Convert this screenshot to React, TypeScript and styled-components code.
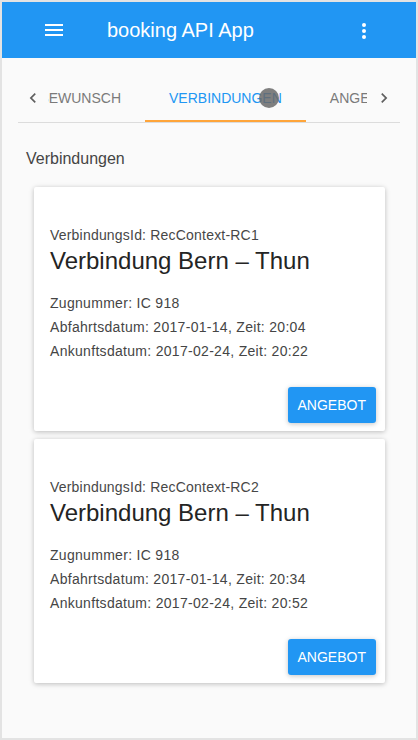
import React, { useLayoutEffect, useRef } from "react";
import styled, { createGlobalStyle } from "styled-components";

const GlobalStyle = createGlobalStyle`
  html, body { margin: 0; padding: 0; background: #ffffff; }
  body { font-family: "Liberation Sans", Arial, sans-serif; }
  * { box-sizing: border-box; }
`;

const Frame = styled.div`
  width: 418px;
  height: 740px;
  border: 2px solid #e3e3e3;
  background: #fafafa;
  display: flex;
  flex-direction: column;
  overflow: hidden;
`;

const AppBar = styled.header`
  height: 56px;
  flex-shrink: 0;
  background: #2196f3;
  display: flex;
  align-items: center;
  padding: 0 28px;
  color: #ffffff;
`;

const IconButton = styled.button`
  width: 48px;
  height: 48px;
  border: 0;
  padding: 0;
  background: transparent;
  display: flex;
  align-items: center;
  justify-content: center;
  color: inherit;
  cursor: pointer;
`;

const Title = styled.h1`
  flex: 1;
  margin: 0 0 0 29px;
  font-size: 20px;
  font-weight: 400;
  line-height: 24px;
  color: #ffffff;
`;

const Content = styled.main`
  flex: 1;
  padding: 16px;
  display: flex;
  flex-direction: column;
`;

const TabBar = styled.nav`
  position: relative;
  display: flex;
  height: 49px;
  border-bottom: 1px solid #dcdcdc;
`;

const ArrowButton = styled.button<{ $w: number }>`
  width: ${(p) => p.$w}px;
  height: 48px;
  flex-shrink: 0;
  border: 0;
  padding: 0;
  background: transparent;
  display: flex;
  align-items: center;
  justify-content: center;
  color: #5f5f5f;
`;

const TabViewport = styled.div`
  flex: 1;
  display: flex;
  overflow: hidden;
`;

const Tab = styled.button<{ $active?: boolean }>`
  flex-shrink: 0;
  height: 48px;
  padding: 2px 24px 0;
  border: 0;
  border-bottom: 2px solid ${(p) => (p.$active ? "#ffa53a" : "transparent")};
  background: transparent;
  font-family: "Liberation Sans", Arial, sans-serif;
  font-size: 14px;
  text-transform: uppercase;
  white-space: nowrap;
  color: ${(p) => (p.$active ? "#2196f3" : "#7a7a7a")};
`;

const TouchDot = styled.span`
  position: absolute;
  left: 241px;
  top: 14px;
  width: 20px;
  height: 20px;
  border-radius: 50%;
  background: rgba(105, 105, 105, 0.85);
  pointer-events: none;
`;

const Heading = styled.h2`
  margin: 24px 0 0 8px;
  font-size: 16px;
  font-weight: 400;
  line-height: 24px;
  color: #454545;
`;

const CardList = styled.div`
  margin-top: 16px;
  padding: 0 15px 0 16px;
  display: flex;
  flex-direction: column;
  gap: 8px;
`;

const Card = styled.article`
  background: #ffffff;
  border-radius: 2px;
  box-shadow: 0 1px 6px rgba(0, 0, 0, 0.12), 0 1px 4px rgba(0, 0, 0, 0.14);
  padding: 38px 9px 8px 16px;
  display: flex;
  flex-direction: column;
`;

const CardId = styled.div`
  font-size: 14px;
  line-height: 20px;
  letter-spacing: 0.2px;
  color: #474747;
`;

const CardTitle = styled.h3`
  margin: 0;
  font-size: 24px;
  font-weight: 400;
  line-height: 32px;
  color: #242424;
`;

const Details = styled.div`
  margin-top: 14px;
  display: flex;
  flex-direction: column;
`;

const DetailLine = styled.div`
  font-size: 14px;
  line-height: 24px;
  letter-spacing: 0.3px;
  color: #454545;
`;

const Actions = styled.div`
  margin-top: 24px;
  display: flex;
  justify-content: flex-end;
`;

const ActionButton = styled.button`
  height: 36px;
  padding: 0 10px;
  border: 0;
  border-radius: 3px;
  background: #2196f3;
  color: #ffffff;
  font-family: "Liberation Sans", Arial, sans-serif;
  font-size: 14px;
  text-transform: uppercase;
  box-shadow: 0 1px 6px rgba(0, 0, 0, 0.12), 0 1px 4px rgba(0, 0, 0, 0.12);
`;

const MenuIcon = () => (
  <svg width="24" height="24" viewBox="0 0 24 24" fill="#ffffff">
    <rect x="3" y="6" width="18" height="2" />
    <rect x="3" y="11" width="18" height="2" />
    <rect x="3" y="16" width="18" height="2" />
  </svg>
);

const MoreIcon = () => (
  <svg width="24" height="24" viewBox="0 0 24 24" fill="#ffffff">
    <circle cx="12" cy="7" r="2" />
    <circle cx="12" cy="13" r="2" />
    <circle cx="12" cy="19" r="2" />
  </svg>
);

const Chevron = ({ dir }: { dir: "left" | "right" }) => (
  <svg width="20" height="20" viewBox="0 0 24 24" fill="currentColor">
    {dir === "left" ? (
      <path d="M15.41 7.41L14 6l-6 6 6 6 1.41-1.41L10.83 12z" />
    ) : (
      <path d="M8.59 16.59L10 18l6-6-6-6-1.41 1.41L13.17 12z" />
    )}
  </svg>
);

const connections = [
  { id: "RecContext-RC1", dep: "20:04", arr: "20:22" },
  { id: "RecContext-RC2", dep: "20:34", arr: "20:52" },
];

export default function App() {
  const viewportRef = useRef<HTMLDivElement>(null);
  const activeRef = useRef<HTMLButtonElement>(null);

  useLayoutEffect(() => {
    const vp = viewportRef.current;
    const tab = activeRef.current;
    if (vp && tab) {
      vp.scrollLeft = tab.offsetLeft - vp.offsetLeft - 97;
    }
  }, []);

  return (
    <>
      <GlobalStyle />
      <Frame>
        <AppBar>
          <IconButton aria-label="Menü">
            <MenuIcon />
          </IconButton>
          <Title>booking API App</Title>
          <IconButton aria-label="Mehr">
            <MoreIcon />
          </IconButton>
        </AppBar>
        <Content>
          <TabBar>
            <ArrowButton $w={30}>
              <Chevron dir="left" />
            </ArrowButton>
            <TabViewport ref={viewportRef}>
              <Tab>Reisewunsch</Tab>
              <Tab $active ref={activeRef}>
                Verbindungen
              </Tab>
              <Tab>Angebote</Tab>
            </TabViewport>
            <ArrowButton $w={33}>
              <Chevron dir="right" />
            </ArrowButton>
            <TouchDot />
          </TabBar>
          <Heading>Verbindungen</Heading>
          <CardList>
            {connections.map((c) => (
              <Card key={c.id}>
                <CardId>VerbindungsId: {c.id}</CardId>
                <CardTitle>Verbindung Bern – Thun</CardTitle>
                <Details>
                  <DetailLine>Zugnummer: IC 918</DetailLine>
                  <DetailLine>Abfahrtsdatum: 2017-01-14, Zeit: {c.dep}</DetailLine>
                  <DetailLine>Ankunftsdatum: 2017-02-24, Zeit: {c.arr}</DetailLine>
                </Details>
                <Actions>
                  <ActionButton>Angebot</ActionButton>
                </Actions>
              </Card>
            ))}
          </CardList>
        </Content>
      </Frame>
    </>
  );
}
